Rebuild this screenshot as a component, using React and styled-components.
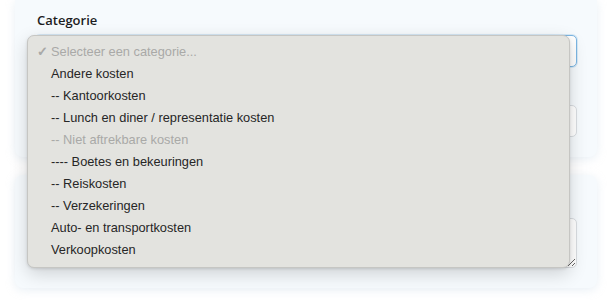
import styled, { createGlobalStyle } from 'styled-components';

const GlobalStyle = createGlobalStyle`
  body {
    margin: 0;
    background: #ffffff;
    font-family: "Open Sans", "Liberation Sans", sans-serif;
  }
`;

const Page = styled.div`
  display: flex;
  flex-direction: column;
  gap: 18px;
  padding: 0 18px 0 15px;
  width: 615px;
  height: 300px;
  box-sizing: border-box;
  overflow: hidden;
`;

const Card = styled.div`
  display: flex;
  flex-direction: column;
  gap: ${(p) => p.$gap || 38}px;
  padding: ${(p) => p.$pad};
  background: #f6fafd;
  border-radius: ${(p) => (p.$round ? '8px' : '0 0 8px 8px')};
  box-shadow: 0 2px 10px rgba(190, 210, 225, 0.35);
`;

const Field = styled.div`
  display: flex;
  flex-direction: column;
  gap: 6px;
  position: relative;
`;

const Label = styled.label`
  font-size: 13px;
  font-weight: 600;
  color: #1d1d1f;
  padding-left: 2px;
  line-height: 18px;
`;

const Select = styled.div`
  height: 32px;
  box-sizing: border-box;
  border: 1px solid ${(p) => (p.$focus ? '#7cb6e3' : '#d9dde1')};
  border-radius: 5px;
  background: #ffffff;
  box-shadow: ${(p) => (p.$focus ? '0 0 0 1px rgba(124, 182, 227, 0.25)' : 'none')};
`;

const TextArea = styled.textarea`
  height: 50px;
  box-sizing: border-box;
  border: 1px solid #d9dde1;
  border-radius: 5px;
  background: #ffffff;
  resize: vertical;
  display: block;
  width: 100%;
  margin: 0;
`;

const Menu = styled.ul`
  position: absolute;
  top: 24px;
  left: -8px;
  width: 543px;
  margin: 0;
  padding: 4px 0 7px;
  list-style: none;
  box-sizing: border-box;
  background: #e3e3df;
  border: 1px solid #c6c6c3;
  border-radius: 7px;
  box-shadow: 0 6px 18px rgba(0, 0, 0, 0.16), 0 1px 3px rgba(0, 0, 0, 0.12);
  z-index: 10;
  font-family: "Liberation Sans", Arial, sans-serif;
`;

const Item = styled.li`
  display: flex;
  align-items: center;
  height: 22px;
  padding-left: 23px;
  position: relative;
  font-size: 12.8px;
  color: ${(p) => (p.$disabled ? '#a9a9a7' : '#262626')};
  white-space: pre;
`;

const Check = styled.span`
  position: absolute;
  left: 9px;
  font-size: 13px;
  font-weight: 700;
  color: #a9a9a7;
`;

const options = [
  { label: 'Selecteer een categorie...', disabled: true, checked: true },
  { label: 'Andere kosten' },
  { label: '-- Kantoorkosten' },
  { label: '-- Lunch en diner / representatie kosten' },
  { label: '-- Niet aftrekbare kosten', disabled: true },
  { label: '---- Boetes en bekeuringen' },
  { label: '-- Reiskosten' },
  { label: '-- Verzekeringen' },
  { label: 'Auto- en transportkosten' },
  { label: 'Verkoopkosten' },
];

export default function App() {
  return (
    <>
      <GlobalStyle />
      <Page>
        <Card $pad="11px 20px 20px 20px">
          <Field>
            <Label>Categorie</Label>
            <Select $focus />
            <Menu>
              {options.map((o) => (
                <Item key={o.label} $disabled={o.disabled}>
                  {o.checked && <Check>✓</Check>}
                  {o.label}
                </Item>
              ))}
            </Menu>
          </Field>
          <Select />
        </Card>
        <Card $round $gap={0} $pad="43px 20px 20px 20px">
          <TextArea aria-label="Omschrijving" />
        </Card>
      </Page>
    </>
  );
}
